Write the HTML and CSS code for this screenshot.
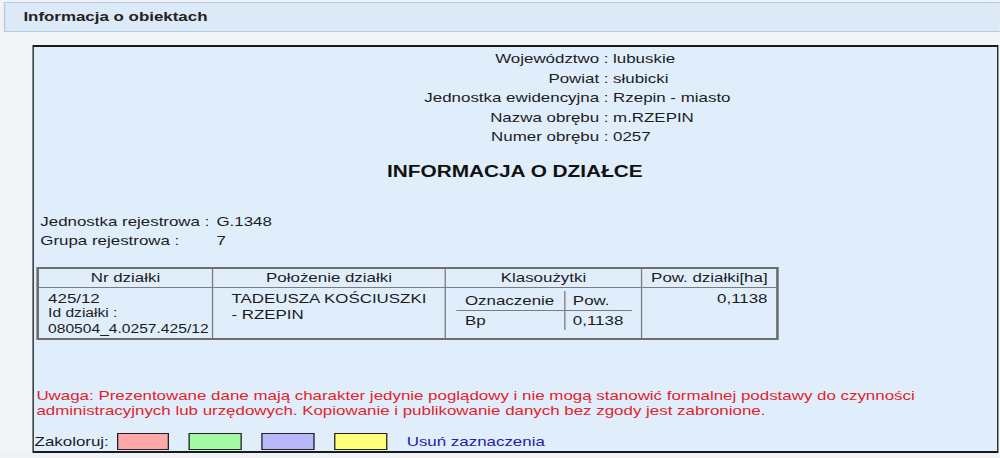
FILE: index.html
```html
<!DOCTYPE html>
<html lang="pl">
<head>
  <meta charset="UTF-8" />
  <meta name="viewport" content="width=device-width, initial-scale=1.0"/>
  <title>Informacja o obiektach</title>
  <link rel="stylesheet" href="styles.css">
</head>
<body>
  <div class="screen">
    <div class="panel-head">Informacja o obiektach</div>

    <div class="panel-body">
      <div class="info-box">

        <!-- dane jednostki administracyjnej -->
        <div class="admin">
          <span class="label">Województwo :</span><span>lubuskie</span>
          <span class="label">Powiat :</span><span>słubicki</span>
          <span class="label">Jednostka ewidencyjna :</span><span>Rzepin - miasto</span>
          <span class="label">Nazwa obrębu :</span><span>m.RZEPIN</span>
          <span class="label">Numer obrębu :</span><span>0257</span>
        </div>

        <h2>INFORMACJA O DZIAŁCE</h2>

        <div class="registry">
          <span>Jednostka rejestrowa :</span><span>G.1348</span>
          <span>Grupa rejestrowa :</span><span>7</span>
        </div>

        <table class="parcels">
          <colgroup>
            <col class="col-nr">
            <col class="col-place">
            <col class="col-class">
            <col class="col-area">
          </colgroup>
          <tr>
            <th>Nr działki</th>
            <th>Położenie działki</th>
            <th>Klasoużytki</th>
            <th>Pow. działki[ha]</th>
          </tr>
          <tr>
            <td class="nr">
              425/12
              <span class="small">Id działki :</span>
              <span class="small">080504_4.0257.425/12</span>
            </td>
            <td class="place">TADEUSZA KOŚCIUSZKI<br>- RZEPIN</td>
            <td class="classes">
              <table class="uses">
                <tr><td class="kind">Oznaczenie</td><td>Pow.</td></tr>
                <tr><td class="kind">Bp</td><td>0,1138</td></tr>
              </table>
            </td>
            <td class="area">0,1138</td>
          </tr>
        </table>

        <p class="warning">Uwaga: Prezentowane dane mają charakter jedynie poglądowy i nie mogą stanowić formalnej podstawy do czynności administracyjnych lub urzędowych. Kopiowanie i publikowanie danych bez zgody jest zabronione.</p>

        <div class="colors">
          <span class="colors-label">Zakoloruj:</span>
          <span class="swatch red"></span>
          <span class="swatch green"></span>
          <span class="swatch blue"></span>
          <span class="swatch yellow"></span>
          <a href="#" class="clear">Usuń zaznaczenia</a>
        </div>

      </div>
    </div>
  </div>
</body>
</html>
```

FILE: styles.css
```css
body {
  margin: 0;
  background-color: #f1f2f5;
  font-family: "Liberation Sans", Arial, sans-serif;
  font-size: 13px;
  color: #1c1c1c;
  overflow: hidden;
}

.screen {
  width: 769px;
  height: 458px;
  transform: scaleX(1.3);
  transform-origin: 0 0;
}

.panel-head {
  margin: 2px 0 0 3px;
  height: 28px;
  line-height: 28px;
  padding-left: 14px;
  background-color: #dce9f7;
  border: 1px solid #b6cbe2;
  border-right: 0;
  font-weight: bold;
  color: #222;
}

.panel-body {
  padding: 13px 1.5px 0 24.6px;
  background-color: #f3f4f5;
}

.info-box {
  background-color: #e0eefc;
  border: 2px solid #1b1b1b;
  border-left-width: 1.5px;
  border-right-width: 1.5px;
  padding: 2.25px 1px 1px 1px;
}

.admin {
  display: grid;
  grid-template-columns: 441.5px auto;
  column-gap: 3.5px;
  line-height: 19.5px;
}

.admin .label {
  text-align: right;
}

h2 {
  margin: 14.75px 0 0;
  font-size: 16px;
  line-height: 19px;
  text-align: center;
  color: #111;
}

.registry {
  display: grid;
  grid-template-columns: 135.5px auto;
  margin-top: 31px;
  padding-left: 4.4px;
  line-height: 19px;
}

.parcels {
  margin: 17.5px 0 0 1.4px;
  border: 2px solid #6e6e6e;
  border-spacing: 0;
  table-layout: fixed;
  width: 571.4px;
}

.col-nr { width: 134px; }
.col-place { width: 179.2px; }
.col-class { width: 150.8px; }
.col-area { width: 103.4px; }

.parcels th {
  height: 18px;
  padding: 0;
  line-height: 18px;
  font-weight: normal;
  border-bottom: 1px solid #7c7c7c;
  border-right: 1px solid #7c7c7c;
}

.parcels > tbody > tr > td {
  height: 47px;
  padding: 0;
  vertical-align: top;
  border-right: 1px solid #7c7c7c;
}

.parcels th:last-child,
.parcels > tbody > tr > td:last-child {
  border-right: 0;
}

.parcels td.nr {
  padding: 2.5px 4px 0 7px;
  line-height: 15.5px;
}

.nr .small {
  display: block;
  font-size: 12px;
}

.parcels td.place {
  padding: 3px 4px 0 14px;
  line-height: 16px;
}

.parcels td.classes {
  padding: 3px 7px 0 7.5px;
}

.parcels td.area {
  padding: 2.5px 7px 0 0;
  line-height: 15.5px;
  text-align: right;
}

.uses {
  width: 135.5px;
  border-spacing: 0;
  table-layout: fixed;
}

.uses td {
  height: 19px;
  padding: 0 0 0 6px;
  line-height: 19px;
}

.uses td.kind {
  width: 76px;
  padding-left: 7px;
  border-right: 1px solid #7c7c7c;
}

.uses tr:first-child td {
  border-bottom: 1px solid #7c7c7c;
}

.warning {
  margin: 47.5px 0 0;
  padding-left: 1.4px;
  line-height: 15px;
  color: #e3222b;
}

.colors {
  display: flex;
  align-items: center;
  margin-top: 15.5px;
  height: 17px;
}

.colors-label {
  margin-right: 6px;
}

.swatch {
  width: 38.8px;
  height: 15px;
  margin-right: 15px;
  border: 1px solid #222;
}

.swatch.red { background-color: #ffa8a8; }
.swatch.green { background-color: #a2fba2; }
.swatch.blue { background-color: #b8b8fb; }
.swatch.yellow { background-color: #ffff7c; }

.clear {
  color: #1f22a8;
  text-decoration: none;
}
```
